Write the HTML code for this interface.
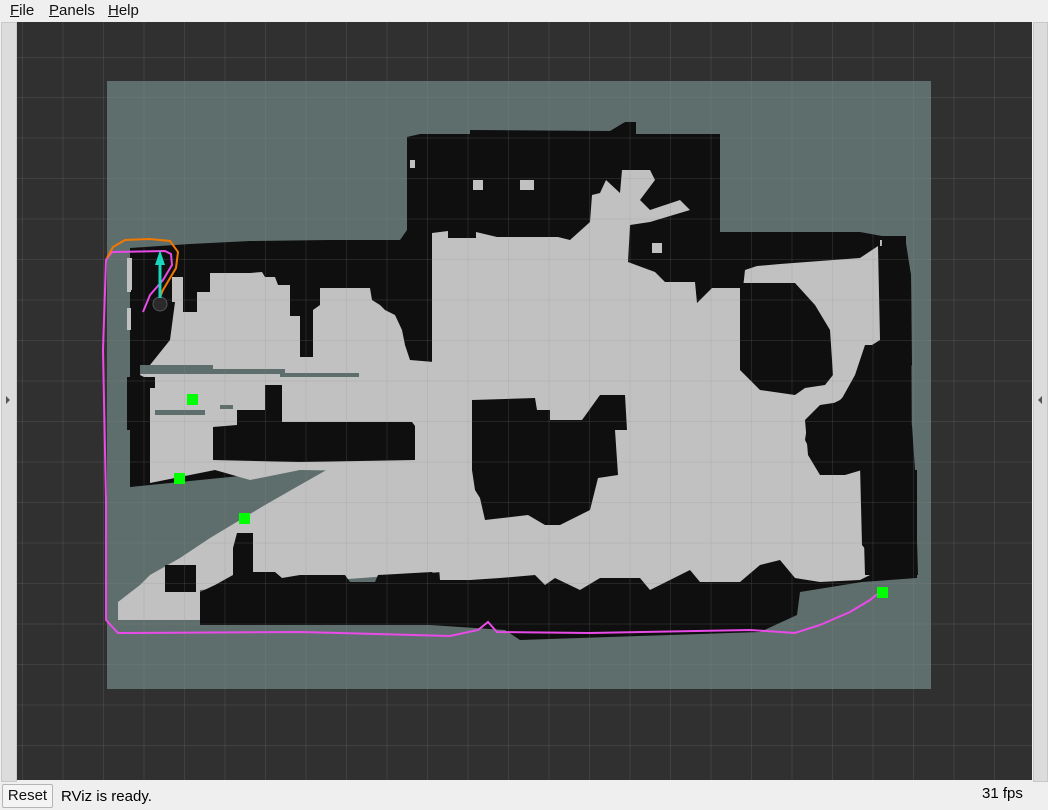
<!DOCTYPE html>
<html><head><meta charset="utf-8"><style>
html,body{margin:0;padding:0;width:1048px;height:810px;overflow:hidden;background:#efefef;font-family:"Liberation Sans",sans-serif;}
.menu{position:absolute;top:0;left:0;width:1048px;height:22px;background:#efefef;font-size:15px;}
.menu span{position:absolute;top:2px;color:#111}
.menu u{text-decoration:underline}
.lp{position:absolute;left:1px;top:22px;width:14px;height:758px;background:#dcdcdc;border:1px solid #c8c8c8;}
.rp{position:absolute;left:1033px;top:22px;width:13px;height:758px;background:#dcdcdc;border:1px solid #c8c8c8;}
svg{position:absolute;left:0;top:0}
.status{position:absolute;top:782px;left:0;width:1048px;height:28px;font-size:15px;}
.btn{position:absolute;left:2px;top:2px;width:49px;height:22px;border:1px solid #b5b5b5;border-radius:2px;background:#f4f4f4;text-align:center;line-height:22px;color:#111}
</style></head><body>
<div class="menu"><span style="left:10px"><u>F</u>ile</span><span style="left:49px"><u>P</u>anels</span><span style="left:108px"><u>H</u>elp</span></div>
<div class="lp"></div><div class="rp"></div>
<svg width="1048" height="810" viewBox="0 0 1048 810">
<polygon points="6,396 10,400 6,404" fill="#555"/>
<polygon points="1042,396 1038,400 1042,404" fill="#555"/>
<rect x="17" y="22" width="1015" height="758" fill="#303030"/>
<rect x="107" y="81" width="824" height="608" fill="#5e6e6c"/>
<g fill="#0f0f0f">
<polygon points="130,248 190,244 250,241 330,240 400,240 407,230 407,137 420,134 470,134 470,130 610,131 625,122 636,122 636,134 720,134 720,232 860,232 882,236 906,236 906,262 911,275 912,470 917,470 917,578 862,582 800,592 797,615 760,632 520,640 505,630 430,625 430,470 300,470 130,487"/>
</g>
<g fill="#c1c1c1">
<polygon points="432,233 448,231 448,238 476,238 476,232 497,237 558,237 570,240 590,222 592,195 600,193 606,180 620,193 622,170 650,170 655,180 640,200 650,210 680,200 690,210 650,222 630,225 628,262 655,272 665,282 695,282 697,303 712,288 743,288 745,270 757,266 780,264 860,258 878,246 880,340 872,345 858,375 850,390 840,400 820,410 808,420 805,440 815,460 860,465 862,545 870,555 870,575 860,580 820,582 795,578 780,560 760,565 740,582 700,582 690,570 650,590 640,578 600,578 580,590 555,578 545,585 535,575 500,578 470,580 440,580 432,480"/>
<polygon points="172,277 183,277 183,312 197,312 197,292 210,292 210,273 250,273 262,272 265,277 275,277 278,285 290,285 290,316 300,316 300,357 313,357 313,310 320,305 320,288 370,288 372,300 380,305 385,310 395,315 402,330 405,345 410,360 434,362 434,472 300,470 250,480 215,470 150,483 150,380 140,375 150,340 152,336 168,336 168,322 172,320"/>
<polygon points="118,620 118,602 140,585 150,575 180,558 210,538 240,520 265,505 300,485 330,468 340,462 440,462 442,572 200,590 200,620"/>
<rect x="127" y="258" width="5" height="34"/><rect x="127" y="308" width="5" height="22"/>
<rect x="410" y="160" width="5" height="8"/><rect x="880" y="240" width="8" height="6"/>
</g>
<g fill="#0f0f0f">
<polygon points="265,385 282,385 282,422 412,422 415,426 415,460 300,462 213,460 213,427 237,425 237,410 265,410"/>
<polygon points="472,400 535,398 537,410 550,410 550,420 582,420 600,395 625,395 627,430 615,430 618,475 598,478 590,510 570,520 560,525 545,525 528,515 485,520 480,498 475,490 472,470"/>
<polygon points="740,283 795,283 815,305 830,330 833,375 825,385 805,388 795,395 760,390 755,385 740,370"/>
<polygon points="882,237 905,237 911,275 912,365 890,395 880,410 895,410 900,425 912,425 915,470 918,575 865,575 862,470 845,475 820,475 808,455 805,420 820,405 840,402 855,375 865,345 880,345"/>
<polygon points="127,377 155,377 155,388 145,388 145,485 130,487 130,430 127,430"/>
<polygon points="131,290 150,288 160,302 175,302 170,340 150,365 131,365"/>
<polygon points="200,592 215,585 233,575 233,548 237,533 253,533 253,572 275,572 282,578 300,575 345,575 350,582 375,582 378,575 432,572 438,578 438,625 200,625"/>
<rect x="165" y="565" width="31" height="27"/>
<rect x="520" y="180" width="14" height="10" fill="#c1c1c1"/><rect x="473" y="180" width="10" height="10" fill="#c1c1c1"/>
<rect x="652" y="243" width="10" height="10" fill="#c1c1c1"/>
</g>
<g fill="#5e6e6c">
<rect x="140" y="365" width="73" height="7"/><rect x="140" y="369" width="145" height="5"/><rect x="280" y="373" width="79" height="4"/>
<rect x="155" y="410" width="50" height="5"/><rect x="220" y="405" width="13" height="4"/>
</g>
<g stroke="#8a8a8a" stroke-opacity="0.18" stroke-width="1">
<path d="M22.5 22V780M63 22V780M103.5 22V780M144 22V780M184.5 22V780M225 22V780M265.5 22V780M306 22V780M346.5 22V780M387 22V780M427.5 22V780M468 22V780M508.5 22V780M549 22V780M589.5 22V780M630 22V780M670.5 22V780M711 22V780M751.5 22V780M792 22V780M832.5 22V780M873 22V780M913.5 22V780M954 22V780M994.5 22V780"/>
<path d="M17 57.5H1032M17 97.5H1032M17 138H1032M17 178.5H1032M17 219H1032M17 259.5H1032M17 300H1032M17 340.5H1032M17 381H1032M17 421.5H1032M17 462H1032M17 502.5H1032M17 543H1032M17 583.5H1032M17 624H1032M17 664.5H1032M17 705H1032M17 745.5H1032"/>
</g>
<polyline fill="none" stroke="#e84be8" stroke-width="2" points="143,312 150,295 163,280 172,265 171,254 165,251 112,252 106,260 103,350 106,500 106,620 118,633 300,632 450,636 478,630 488,622 497,632 590,633 750,630 795,633 820,625 850,612 870,600 880,592"/>
<polyline fill="none" stroke="#f07800" stroke-width="2" points="158,302 163,290 176,268 178,252 170,241 150,239 125,240 113,247 107,258"/>
<circle cx="160" cy="304" r="7" fill="#2a2a2a" stroke="#555"/>
<line x1="160" y1="298" x2="160" y2="262" stroke="#1ad6c0" stroke-width="3"/>
<polygon points="155,265 160,250 165,265" fill="#1ad6c0"/>
<g fill="#00ff00"><rect x="187" y="394" width="11" height="11"/><rect x="174" y="473" width="11" height="11"/><rect x="239" y="513" width="11" height="11"/><rect x="877" y="587" width="11" height="11"/></g>
</svg>
<div class="status"><div class="btn">Reset</div><span style="position:absolute;left:61px;top:6px">RViz is ready.</span><span style="position:absolute;left:982px;top:3px">31 fps</span></div>
</body></html>
